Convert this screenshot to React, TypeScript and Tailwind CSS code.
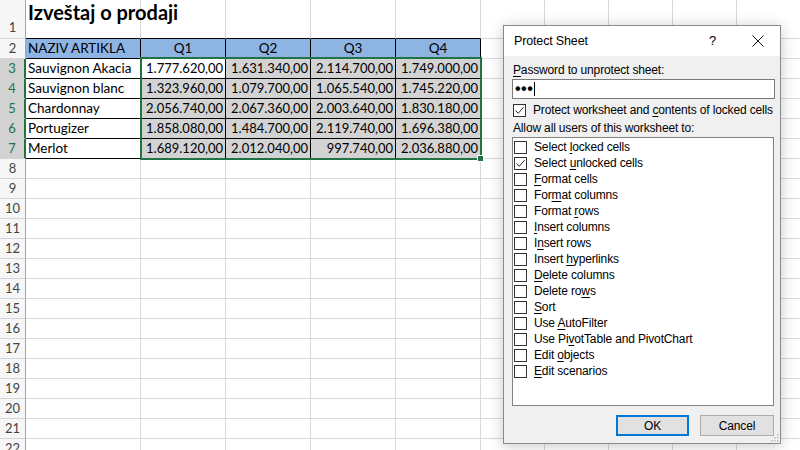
import React from "react";

const COLS = [115, 85, 85, 85, 85, 64, 64, 64, 64, 64];

const DATA: [string, string[]][] = [
  ["Sauvignon Akacia", ["1.777.620,00", "1.631.340,00", "2.114.700,00", "1.749.000,00"]],
  ["Sauvignon blanc", ["1.323.960,00", "1.079.700,00", "1.065.540,00", "1.745.220,00"]],
  ["Chardonnay", ["2.056.740,00", "2.067.360,00", "2.003.640,00", "1.830.180,00"]],
  ["Portugizer", ["1.858.080,00", "1.484.700,00", "2.119.740,00", "1.696.380,00"]],
  ["Merlot", ["1.689.120,00", "2.012.040,00", "997.740,00", "2.036.880,00"]],
];

function RowHeader({ n, selected, tall }: { n: number; selected?: boolean; tall?: boolean }) {
  return (
    <div
      className={
        "shrink-0 w-[26px] flex justify-center border-b border-b-[#d4d4d4] text-[13px] " +
        (tall ? "h-[39px] items-end pb-[1px] " : "h-[20px] items-center ") +
        (selected
          ? "bg-[#d2d2d2] text-[#217346] border-r-2 border-r-[#217346]"
          : "bg-[#f7f7f7] text-[#444444] border-r border-r-[#a6a6a6]")
      }
    >
      {n}
    </div>
  );
}

function Row({ r }: { r: number }) {
  const tall = r === 1;
  const h = tall ? "h-[39px]" : "h-[20px]";
  const sel = r >= 3 && r <= 7;
  return (
    <div className="flex">
      <RowHeader n={r} selected={sel} tall={tall} />
      {COLS.map((w, c) => {
        const inTable = c <= 4 && r >= 2 && r <= 7;
        const topOfTable = r === 1 && c <= 4;
        let cls = `shrink-0 ${h} border-r border-b flex items-center whitespace-nowrap `;
        cls += inTable ? "border-r-black border-b-black " : "border-r-[#d9d9d9] ";
        if (topOfTable) cls += "border-b-black ";
        else if (!inTable) cls += "border-b-[#d9d9d9] ";
        let content: React.ReactNode = null;
        if (r === 1 && c === 0) {
          cls += "relative z-10 items-start overflow-visible ";
          content = (
            <span className="pl-[2px] pt-[1px] text-[20px] leading-[23px] font-bold text-black">
              Izveštaj o prodaji
            </span>
          );
        } else if (r === 2 && c <= 4) {
          cls += "bg-[#8db4e2] ";
          if (c === 0) {
            content = <span className="pl-[2px]">NAZIV ARTIKLA</span>;
          } else {
            cls += "justify-center ";
            content = <span>Q{c}</span>;
          }
        } else if (sel && c <= 4) {
          const [name, vals] = DATA[r - 3];
          if (c === 0) {
            cls += "bg-white ";
            content = <span className="pl-[2px]">{name}</span>;
          } else {
            cls += (r === 3 && c === 1 ? "bg-white " : "bg-[#d3d3d3] ") + "justify-end ";
            content = <span className="pr-[2px] text-[13px]">{vals[c - 1]}</span>;
          }
        } else {
          cls += "bg-white ";
        }
        return (
          <div key={c} className={cls} style={{ width: w }}>
            {content}
          </div>
        );
      })}
    </div>
  );
}

function Box({ checked }: { checked?: boolean }) {
  return (
    <div className="shrink-0 w-[13px] h-[13px] border border-[#333333] bg-white flex items-center justify-center">
      {checked && (
        <svg width="11" height="11" viewBox="0 0 11 11">
          <path d="M1.5 5.5 L4.2 8.3 L9.6 2.2" fill="none" stroke="#222" strokeWidth="1" />
        </svg>
      )}
    </div>
  );
}

const ITEMS: [string, number, boolean][] = [
  ["Select locked cells", 7, false],
  ["Select unlocked cells", 7, true],
  ["Format cells", 0, false],
  ["Format columns", 3, false],
  ["Format rows", 7, false],
  ["Insert columns", 0, false],
  ["Insert rows", 1, false],
  ["Insert hyperlinks", 7, false],
  ["Delete columns", 0, false],
  ["Delete rows", 9, false],
  ["Sort", 0, false],
  ["Use AutoFilter", 4, false],
  ["Use PivotTable and PivotChart", 6, false],
  ["Edit objects", 5, false],
  ["Edit scenarios", 0, false],
];

function Acc({ text, i }: { text: string; i: number }) {
  return (
    <span>
      {text.slice(0, i)}
      <u className="underline-offset-[2px]">{text[i]}</u>
      {text.slice(i + 1)}
    </span>
  );
}

function Dialog() {
  return (
    <div className="absolute left-[503px] top-[25px] w-[278px] h-[419px] border border-[#8a8a8a] bg-[#f0f0f0] shadow-[0_2px_14px_rgba(0,0,0,0.22)] flex flex-col font-['Liberation_Sans',Arial,sans-serif] text-[12px] tracking-[-0.15px] text-black">
      <div className="h-[30px] shrink-0 bg-white flex items-center pl-[10px]">
        <span className="flex-1 text-[12.5px]">Protect Sheet</span>
        <span className="text-[13px] mr-[36px]">?</span>
        <svg width="12" height="12" viewBox="0 0 12 12" className="mr-[16px]">
          <path d="M0.5 0.5 L11.5 11.5 M11.5 0.5 L0.5 11.5" stroke="#111" strokeWidth="1" />
        </svg>
      </div>
      <div className="flex flex-col">
        <div className="h-[16px] mt-[6px] ml-[9px] flex items-center">
          <Acc text="Password to unprotect sheet:" i={0} />
        </div>
        <div className="ml-[8px] mt-[1px] w-[263px] h-[20px] border border-[#7a7a7a] bg-white flex items-center pl-[2px]">
          <span className="text-[16px] font-bold tracking-[0.5px] leading-none">•••</span>
          <span className="w-[1px] h-[14px] bg-black ml-[1px]" />
        </div>
        <div className="h-[16px] mt-[3px] ml-[9px] flex items-center">
          <Box checked />
          <span className="ml-[7px]">
            Protect worksheet and <Acc text="contents" i={0} /> of locked cells
          </span>
        </div>
        <div className="h-[16px] mt-[2px] ml-[9px] flex items-center">
          <span>Allow all users of this worksheet to:</span>
        </div>
        <div className="ml-[8px] mt-[1px] w-[262px] h-[269px] border border-[#828282] bg-white pt-[1px] flex flex-col">
          {ITEMS.map(([t, i, c]) => (
            <div key={t} className="h-[16px] flex items-center ml-[1px]">
              <Box checked={c} />
              <span className="ml-[7px]">
                <Acc text={t} i={i} />
              </span>
            </div>
          ))}
        </div>
        <div className="flex justify-end mt-[9px] mr-[6px] gap-[11px]">
          <button className="w-[73px] h-[21px] border-2 border-[#0078d7] bg-[#e1e1e1] flex items-center justify-center">
            OK
          </button>
          <button className="w-[74px] h-[21px] border border-[#adadad] bg-[#e1e1e1] flex items-center justify-center">
            Cancel
          </button>
        </div>
      </div>
      <svg width="8" height="8" viewBox="0 0 8 8" className="absolute right-[1px] bottom-[1px]">
        <rect x="6" y="0" width="1.5" height="1.5" fill="#b8b8b8" />
        <rect x="3" y="3" width="1.5" height="1.5" fill="#b8b8b8" />
        <rect x="6" y="3" width="1.5" height="1.5" fill="#b8b8b8" />
        <rect x="0" y="6" width="1.5" height="1.5" fill="#b8b8b8" />
        <rect x="3" y="6" width="1.5" height="1.5" fill="#b8b8b8" />
        <rect x="6" y="6" width="1.5" height="1.5" fill="#b8b8b8" />
      </svg>
    </div>
  );
}

export default function App() {
  const rows = Array.from({ length: 22 }, (_, i) => i + 1);
  return (
    <div className="relative w-[800px] h-[450px] overflow-hidden bg-white font-['Lato',sans-serif] text-[13.5px] text-black">
      <div className="flex flex-col">
        {rows.map((r) => (
          <Row key={r} r={r} />
        ))}
      </div>
      <div className="absolute left-[140px] top-[57px] w-[342px] h-[103px] border-2 border-[#217346] pointer-events-none" />
      <div className="absolute left-[477px] top-[155px] w-[7px] h-[7px] bg-[#217346] border border-white" />
      <Dialog />
    </div>
  );
}
